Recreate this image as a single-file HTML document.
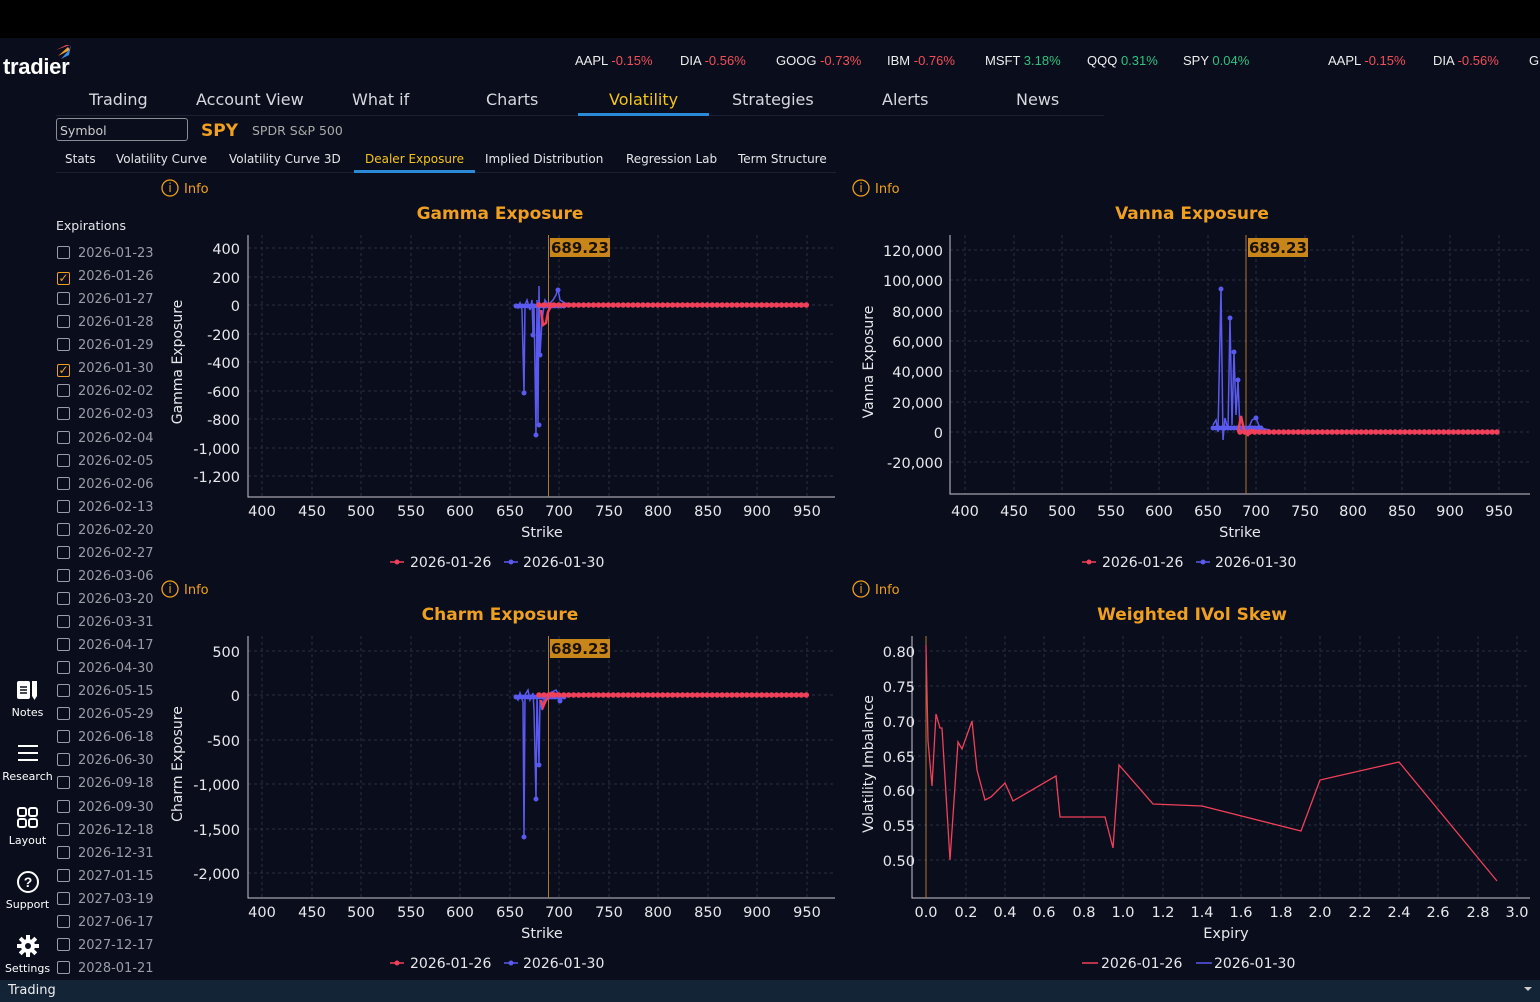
<!DOCTYPE html>
<html><head><meta charset="utf-8"><style>
*{margin:0;padding:0;box-sizing:border-box}
body{width:1540px;height:1002px;background:#0a0d1b;font-family:"DejaVu Sans","Liberation Sans",sans-serif;color:#e8e8ec;position:relative;overflow:hidden}
.a{position:absolute;white-space:nowrap}
.top{left:0;top:0;width:1540px;height:38px;background:#000}
.nav{top:90px;font-size:16px;color:#d6d8de}
.sub{top:152px;font-size:12px;color:#e6e6ea}
.tk{top:53px;font-size:13px;color:#eee;font-family:"Liberation Sans",sans-serif}
.r{color:#f0505a}.g{color:#2ec27e}
.exp{left:57px;font-size:13px;color:#9a9ca6}
.cb{display:inline-block;width:13px;height:13px;border:1px solid #9a9ca6;border-radius:2px;vertical-align:-2px;margin-right:8px}
.side{left:0;width:55px;text-align:center;font-size:11px;color:#fff}
</style></head><body>
<div class="a top"></div>
<div class="a" style="left:3px;top:54px;font-size:22px;font-weight:bold;color:#fff;letter-spacing:-0.3px;font-family:'Liberation Sans',sans-serif">tradier</div>
<svg class="a" style="left:52px;top:42px" width="22" height="20"><path d="M4 8 L14 3 L18 3 Z" fill="#e8485c"/><path d="M6 14 L16 5 L18 8 Z" fill="#f0a030"/><path d="M9 17 L17 8 L19 3 L17 13 Z" fill="#3a8ee8"/></svg>
<div class="a tk" style="left:575px">AAPL <span class="r">-0.15%</span></div>
<div class="a tk" style="left:680px">DIA <span class="r">-0.56%</span></div>
<div class="a tk" style="left:776px">GOOG <span class="r">-0.73%</span></div>
<div class="a tk" style="left:887px">IBM <span class="r">-0.76%</span></div>
<div class="a tk" style="left:985px">MSFT <span class="g">3.18%</span></div>
<div class="a tk" style="left:1087px">QQQ <span class="g">0.31%</span></div>
<div class="a tk" style="left:1183px">SPY <span class="g">0.04%</span></div>
<div class="a tk" style="left:1328px">AAPL <span class="r">-0.15%</span></div>
<div class="a tk" style="left:1433px">DIA <span class="r">-0.56%</span></div>
<div class="a tk" style="left:1529px">G</div>
<div class="a nav" style="left:89px">Trading</div>
<div class="a nav" style="left:196px">Account View</div>
<div class="a nav" style="left:352px">What if</div>
<div class="a nav" style="left:486px">Charts</div>
<div class="a nav" style="left:609px;color:#f5c518">Volatility</div>
<div class="a nav" style="left:732px">Strategies</div>
<div class="a nav" style="left:882px">Alerts</div>
<div class="a nav" style="left:1016px">News</div>
<div class="a" style="left:56px;top:115px;width:1048px;height:1px;background:#1c2030"></div>
<div class="a" style="left:578px;top:113px;width:131px;height:3px;background:#2a8ad8"></div>
<div class="a" style="left:56px;top:118px;width:132px;height:23px;border:1px solid #8a8c96;border-radius:3px;font-size:12.5px;color:#ccc;padding:4px 3px">Symbol</div>
<div class="a" style="left:201px;top:121px;font-size:17px;font-weight:bold;color:#f0a020">SPY</div>
<div class="a" style="left:252px;top:123px;font-size:12.5px;color:#aaa">SPDR S&amp;P 500</div>
<div class="a sub" style="left:65px">Stats</div>
<div class="a sub" style="left:116px">Volatility Curve</div>
<div class="a sub" style="left:229px">Volatility Curve 3D</div>
<div class="a sub" style="left:365px;color:#f5c518">Dealer Exposure</div>
<div class="a sub" style="left:485px">Implied Distribution</div>
<div class="a sub" style="left:626px">Regression Lab</div>
<div class="a sub" style="left:738px">Term Structure</div>
<div class="a" style="left:56px;top:172px;width:780px;height:1px;background:#1c2030"></div>
<div class="a" style="left:354px;top:170px;width:121px;height:3px;background:#2a8ad8"></div>
<div class="a" style="left:56px;top:218px;font-size:12.5px">Expirations</div>
<div class="a exp" style="top:242px;line-height:23.06px">
<div><span class="cb"></span>2026-01-23</div><div><span class="cb" style="border-color:#f0a020;color:#f0a020;font-size:12px;line-height:10px;text-align:center">✓</span>2026-01-26</div><div><span class="cb"></span>2026-01-27</div><div><span class="cb"></span>2026-01-28</div><div><span class="cb"></span>2026-01-29</div><div><span class="cb" style="border-color:#f0a020;color:#f0a020;font-size:12px;line-height:10px;text-align:center">✓</span>2026-01-30</div><div><span class="cb"></span>2026-02-02</div><div><span class="cb"></span>2026-02-03</div><div><span class="cb"></span>2026-02-04</div><div><span class="cb"></span>2026-02-05</div><div><span class="cb"></span>2026-02-06</div><div><span class="cb"></span>2026-02-13</div><div><span class="cb"></span>2026-02-20</div><div><span class="cb"></span>2026-02-27</div><div><span class="cb"></span>2026-03-06</div><div><span class="cb"></span>2026-03-20</div><div><span class="cb"></span>2026-03-31</div><div><span class="cb"></span>2026-04-17</div><div><span class="cb"></span>2026-04-30</div><div><span class="cb"></span>2026-05-15</div><div><span class="cb"></span>2026-05-29</div><div><span class="cb"></span>2026-06-18</div><div><span class="cb"></span>2026-06-30</div><div><span class="cb"></span>2026-09-18</div><div><span class="cb"></span>2026-09-30</div><div><span class="cb"></span>2026-12-18</div><div><span class="cb"></span>2026-12-31</div><div><span class="cb"></span>2027-01-15</div><div><span class="cb"></span>2027-03-19</div><div><span class="cb"></span>2027-06-17</div><div><span class="cb"></span>2027-12-17</div><div><span class="cb"></span>2028-01-21</div>
</div>
<svg class="a" style="left:16px;top:678px" width="24" height="24"><rect x="1" y="3" width="13" height="18" rx="2" fill="#fff"/><path d="M4 9h7M4 12h7M4 15h7" stroke="#0a0d1b" stroke-width="1.5"/><rect x="16" y="3" width="5" height="15" fill="#fff"/><path d="M16 18l2.5 4l2.5-4z" fill="#fff"/></svg>
<div class="a side" style="top:706px">Notes</div>
<svg class="a" style="left:16px;top:743px" width="24" height="20"><path d="M2 3h20M2 10h20M2 17h20" stroke="#fff" stroke-width="2"/></svg>
<div class="a side" style="top:770px">Research</div>
<svg class="a" style="left:16px;top:806px" width="24" height="24"><g fill="none" stroke="#fff" stroke-width="2"><rect x="2" y="2" width="8" height="8" rx="2"/><rect x="13" y="2" width="8" height="8" rx="2"/><rect x="2" y="13" width="8" height="8" rx="2"/><rect x="13" y="13" width="8" height="8" rx="2"/></g></svg>
<div class="a side" style="top:834px">Layout</div>
<svg class="a" style="left:16px;top:870px" width="24" height="24"><circle cx="12" cy="12" r="10" fill="none" stroke="#fff" stroke-width="2"/><text x="12" y="17" text-anchor="middle" font-size="14" font-weight="bold" fill="#fff" font-family="Liberation Sans">?</text></svg>
<div class="a side" style="top:898px">Support</div>
<svg class="a" style="left:16px;top:934px" width="24" height="24"><g fill="#fff"><circle cx="12" cy="12" r="7"/><g stroke="#fff" stroke-width="4"><path d="M12 1v22M1 12h22M4.2 4.2l15.6 15.6M19.8 4.2L4.2 19.8"/></g></g><circle cx="12" cy="12" r="3" fill="#0a0d1b"/></svg>
<div class="a side" style="top:962px">Settings</div>
<div class="a" style="left:0;top:980px;width:1540px;height:22px;background:#122436;font-size:13px;color:#eee;padding:3px 8px">Trading</div>
<div class="a" style="left:1524px;top:987px;border:4px solid transparent;border-top-color:#ccc"></div>

<svg class="a" style="left:0;top:0" width="1540" height="980" font-family="DejaVu Sans,Liberation Sans,sans-serif">
<g fill="none" stroke="#f0a020" stroke-width="1.3"><circle cx="170" cy="188" r="8"/><circle cx="861" cy="188" r="8"/><circle cx="170" cy="589" r="8"/><circle cx="861" cy="589" r="8"/></g>
<g fill="#f0a020" font-size="12" text-anchor="middle"><text x="170" y="192">i</text><text x="861" y="192">i</text><text x="170" y="593">i</text><text x="861" y="593">i</text></g>
<g fill="#f0a020" font-size="13"><text x="184" y="193">Info</text><text x="875" y="193">Info</text><text x="184" y="594">Info</text><text x="875" y="594">Info</text></g>
<g fill="#f0a020" font-size="17" font-weight="bold" text-anchor="middle"><text x="500" y="219">Gamma Exposure</text><text x="1192" y="219">Vanna Exposure</text><text x="500" y="620">Charm Exposure</text><text x="1192" y="620">Weighted IVol Skew</text></g>
<g fill="none" stroke="#2a2e40" stroke-dasharray="3 3" stroke-width="1">
<path d="M262 235V497M312 235V497M361 235V497M411 235V497M460 235V497M510 235V497M559 235V497M609 235V497M658 235V497M708 235V497M757 235V497M807 235V497M248 248H835M248 277H835M248 305H835M248 334H835M248 362H835M248 391H835M248 419H835M248 448H835M248 476H835"/>
<path d="M965 235V494M1014 235V494M1062 235V494M1111 235V494M1159 235V494M1208 235V494M1256 235V494M1305 235V494M1353 235V494M1402 235V494M1450 235V494M1499 235V494M950 250H1530M950 280H1530M950 311H1530M950 341H1530M950 371H1530M950 402H1530M950 432H1530M950 462H1530"/>
<path d="M262 636V898M312 636V898M361 636V898M411 636V898M460 636V898M510 636V898M559 636V898M609 636V898M658 636V898M708 636V898M757 636V898M807 636V898M248 651H835M248 695H835M248 740H835M248 784H835M248 829H835M248 873H835"/>
<path d="M926 636V898M966 636V898M1005 636V898M1044 636V898M1084 636V898M1123 636V898M1163 636V898M1202 636V898M1241 636V898M1281 636V898M1320 636V898M1360 636V898M1399 636V898M1438 636V898M1478 636V898M1517 636V898M912 651H1530M912 686H1530M912 721H1530M912 756H1530M912 790H1530M912 825H1530M912 860H1530"/>
</g>
<g fill="none" stroke="#c8c8d0" stroke-width="1"><path d="M248 235V497H835M950 235V494H1530M248 636V898H835M912 636V898H1530"/></g>
<g fill="#e8e8ec" font-size="14.5" text-anchor="end">
<text x="240" y="254">400</text><text x="240" y="283">200</text><text x="240" y="311">0</text><text x="240" y="340">-200</text><text x="240" y="368">-400</text><text x="240" y="397">-600</text><text x="240" y="425">-800</text><text x="240" y="454">-1,000</text><text x="240" y="482">-1,200</text>
<text x="943" y="256">120,000</text><text x="943" y="286">100,000</text><text x="943" y="317">80,000</text><text x="943" y="347">60,000</text><text x="943" y="377">40,000</text><text x="943" y="408">20,000</text><text x="943" y="438">0</text><text x="943" y="468">-20,000</text>
<text x="240" y="657">500</text><text x="240" y="701">0</text><text x="240" y="746">-500</text><text x="240" y="790">-1,000</text><text x="240" y="835">-1,500</text><text x="240" y="879">-2,000</text>
<text x="915" y="657">0.80</text><text x="915" y="692">0.75</text><text x="915" y="727">0.70</text><text x="915" y="762">0.65</text><text x="915" y="796">0.60</text><text x="915" y="831">0.55</text><text x="915" y="866">0.50</text>
</g>
<g fill="#e8e8ec" font-size="14.5" text-anchor="middle">
<g id="gx"><text x="262" y="516">400</text><text x="312" y="516">450</text><text x="361" y="516">500</text><text x="411" y="516">550</text><text x="460" y="516">600</text><text x="510" y="516">650</text><text x="559" y="516">700</text><text x="609" y="516">750</text><text x="658" y="516">800</text><text x="708" y="516">850</text><text x="757" y="516">900</text><text x="807" y="516">950</text></g>
<use href="#gx" y="401"/>
<text x="965" y="516">400</text><text x="1014" y="516">450</text><text x="1062" y="516">500</text><text x="1111" y="516">550</text><text x="1159" y="516">600</text><text x="1208" y="516">650</text><text x="1256" y="516">700</text><text x="1305" y="516">750</text><text x="1353" y="516">800</text><text x="1402" y="516">850</text><text x="1450" y="516">900</text><text x="1499" y="516">950</text>
<text x="926" y="917">0.0</text><text x="966" y="917">0.2</text><text x="1005" y="917">0.4</text><text x="1044" y="917">0.6</text><text x="1084" y="917">0.8</text><text x="1123" y="917">1.0</text><text x="1163" y="917">1.2</text><text x="1202" y="917">1.4</text><text x="1241" y="917">1.6</text><text x="1281" y="917">1.8</text><text x="1320" y="917">2.0</text><text x="1360" y="917">2.2</text><text x="1399" y="917">2.4</text><text x="1438" y="917">2.6</text><text x="1478" y="917">2.8</text><text x="1517" y="917">3.0</text>
<text x="542" y="537">Strike</text><text x="1240" y="537">Strike</text><text x="542" y="938">Strike</text><text x="1226" y="938">Expiry</text>
</g>
<g fill="#e8e8ec" font-size="14" text-anchor="middle">
<text transform="translate(182,362) rotate(-90)">Gamma Exposure</text>
<text transform="translate(873,362) rotate(-90)">Vanna Exposure</text>
<text transform="translate(182,764) rotate(-90)">Charm Exposure</text>
<text transform="translate(873,764) rotate(-90)">Volatility Imbalance</text>
</g>
<g stroke="#b07830" stroke-width="1"><path d="M548.5 235V497M1246 235V494M548.5 636V898M926 636V898"/></g>
<g fill="#c8861a"><rect x="550" y="238" width="60" height="19"/><rect x="1248" y="238" width="60" height="19"/><rect x="550" y="639" width="60" height="19"/></g>
<g fill="#1a1204" font-size="15" font-weight="bold"><text x="551" y="253">689.23</text><text x="1249" y="253">689.23</text><text x="551" y="654">689.23</text></g>
<g fill="none" stroke="#5a5af0" stroke-width="1.5">
<polyline points="515,305 518,308 520,303 522,310 524,393 525,305 527,300 530,310 532,300 533,335 534,305 536,435 537,300 538,425 539,286 540,355 542,320 545,300 548,305 553,300 556,295 558,289 560,300 565,303 575,305"/>
</g>
<g fill="#5a5af0"><circle cx="524" cy="393" r="2.5"/><circle cx="536" cy="435" r="2.5"/><circle cx="539" cy="425" r="2.5"/><circle cx="540" cy="355" r="2.5"/><circle cx="533" cy="335" r="2.5"/><circle cx="558" cy="290" r="2.5"/></g>
<path d="M516 306H565" stroke="#5a5af0" stroke-width="5" stroke-dasharray="0 3" stroke-linecap="round"/>
<polyline points="541,310 543,325 546,323 548,312 552,304 560,305" fill="none" stroke="#f0405a" stroke-width="2.5"/>
<path d="M539 305H808" stroke="#f0405a" stroke-width="5.5" stroke-dasharray="0 4.95" stroke-linecap="round"/>
<polyline points="515,695 518,700 520,693 523,702 524,837 525,695 528,690 530,700 533,693 534,710 536,799 537,695 539,765 540,700 542,710 545,695 552,692 556,690 560,697 570,695" fill="none" stroke="#5a5af0" stroke-width="1.5"/>
<g fill="#5a5af0"><circle cx="524" cy="837" r="2.5"/><circle cx="536" cy="799" r="2.5"/><circle cx="539" cy="765" r="2.5"/><circle cx="560" cy="701" r="2.5"/></g>
<path d="M516 697H565" stroke="#5a5af0" stroke-width="5" stroke-dasharray="0 3" stroke-linecap="round"/>
<polyline points="541,700 543,707 546,700 552,693 560,695" fill="none" stroke="#f0405a" stroke-width="2.5"/>
<path d="M539 695H808" stroke="#f0405a" stroke-width="5.5" stroke-dasharray="0 4.95" stroke-linecap="round"/>
<polyline points="1213,425 1216,420 1218,432 1221,289 1223,440 1225,418 1228,430 1230,318 1232,425 1234,352 1236,415 1238,380 1240,430 1243,425 1247,432 1252,420 1256,418 1260,428 1270,430" fill="none" stroke="#5a5af0" stroke-width="1.5"/>
<g fill="#5a5af0"><circle cx="1221" cy="289" r="2.5"/><circle cx="1230" cy="318" r="2.5"/><circle cx="1234" cy="352" r="2.5"/><circle cx="1238" cy="380" r="2.5"/><circle cx="1256" cy="418" r="2.5"/></g>
<path d="M1213 428H1262" stroke="#5a5af0" stroke-width="5" stroke-dasharray="0 3" stroke-linecap="round"/>
<polyline points="1238,432 1241,416 1244,430 1248,435 1252,430 1260,432" fill="none" stroke="#f0405a" stroke-width="2.5"/>
<path d="M1240 432H1500" stroke="#f0405a" stroke-width="5.5" stroke-dasharray="0 4.85" stroke-linecap="round"/>
<polyline fill="none" stroke="#f0405a" stroke-width="1.3" points="926,645 928,741 932,786 936,714 940,728 942,728 950,860 958,742 962,749 972,721 977,770 985,800 991,797 1005,783 1013,801 1056,776 1060,817 1105,817 1113,848 1119,765 1153,804 1202,806 1301,831 1320,780 1399,762 1497,881"/>
<g font-size="14" fill="#e8e8ec">
<g id="lg"><path d="M390 562h14" stroke="#f0405a" stroke-width="1.5"/><circle cx="397" cy="562" r="2.5" fill="#f0405a"/><text x="410" y="567">2026-01-26</text><path d="M504 562h14" stroke="#5a5af0" stroke-width="1.5"/><circle cx="511" cy="562" r="2.5" fill="#5a5af0"/><text x="523" y="567">2026-01-30</text></g>
<use href="#lg" x="692"/>
<use href="#lg" y="401"/>
<path d="M1082 963h16" stroke="#f0405a" stroke-width="1.5"/><text x="1101" y="968">2026-01-26</text><path d="M1196 963h16" stroke="#5a5af0" stroke-width="1.5"/><text x="1214" y="968">2026-01-30</text>
</g>
</svg>
</body></html>
